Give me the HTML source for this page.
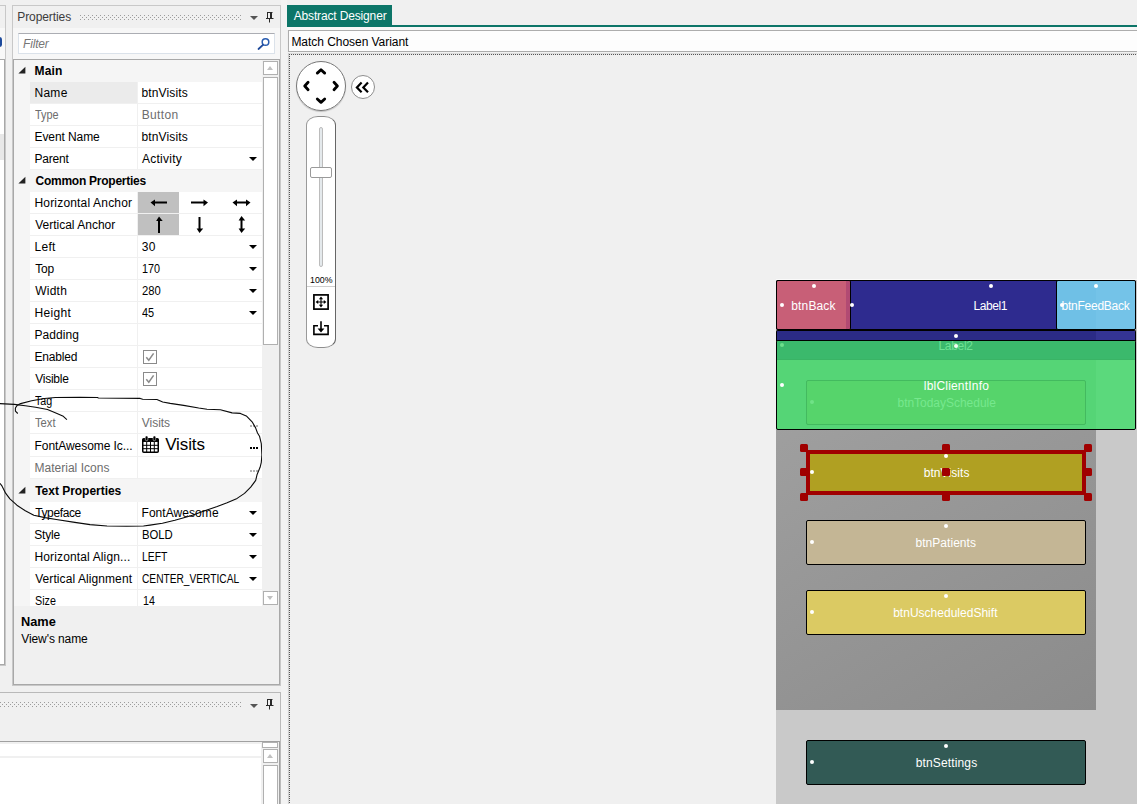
<!DOCTYPE html>
<html><head><meta charset="utf-8">
<style>
*{box-sizing:border-box;margin:0;padding:0}
html,body{width:1137px;height:804px;overflow:hidden;background:#f0f0f0;font-family:"Liberation Sans",sans-serif;font-size:12px;color:#000}
.a{position:absolute}
.t{position:absolute;white-space:nowrap;line-height:14px;height:14px;transform-origin:0 50%}
.b{font-weight:bold}
.g{color:#6d6d6d}
.row{position:absolute;left:30px;width:232px;height:21px;background:#fff}
.cat{position:absolute;left:14px;width:248px;height:22px;background:#f5f5f5}
.vs{position:absolute;left:137px;width:1px;background:#f0f0f0}
.dd{position:absolute;left:249px;width:0;height:0;border-left:4px solid transparent;border-right:4px solid transparent;border-top:4px solid #000}
.tri{position:absolute;left:20px;width:0;height:0;border-left:7px solid transparent;border-bottom:7px solid #222}
.dot{position:absolute;width:4.400px;height:4.400px;border-radius:50%;background:#fff}
.h{position:absolute;width:8px;height:8px;border-radius:1.5px;background:#a00000}
.view{position:absolute;border:1px solid #000;border-radius:2px;color:#fff;text-align:center}
</style></head><body>
<!-- LEFT SLIVER PANEL -->
<div class="a" style="left:-10px;top:5px;width:16px;height:661px;border:1px solid #c8c8c8;background:#f0f0f0"></div>
<div class="a" style="left:-10px;top:28px;width:15px;height:31px;background:#f8f8f8"></div>
<div class="a" style="left:-10px;top:59px;width:15px;height:606px;border:1px solid #a8a8a8;background:#fff"></div>
<div class="a" style="left:-3px;top:37px;width:4.500px;height:10px;background:#1d4a9c;border-radius:3px"></div>
<div class="a" style="left:0;top:134px;width:4px;height:26px;background:#e8e8e8"></div>
<!-- PROPERTIES PANEL -->
<div class="a" id="props" style="left:12px;top:5px;width:269px;height:681px;border:1px solid #c8c8c8;background:#f0f0f0"></div>
<div class="a" style="left:13px;top:28px;width:267px;height:31px;background:#f7f7f7"></div>
<div class="t " style="left:17.3px;top:9.9px;letter-spacing:-0.089px;color:#3c3c3c;font-size:12px;line-height:14px;height:14px;">Properties</div>
<svg class="a" style="left:80px;top:15px" width="161" height="5"><defs><pattern id="dp" width="4" height="4" patternUnits="userSpaceOnUse"><rect width="1" height="1" fill="#9c9c9c"/><rect x="2" y="2" width="1" height="1" fill="#9c9c9c"/></pattern></defs><rect width="161" height="5" fill="url(#dp)"/></svg>
<div class="a" style="left:250px;top:16px;width:0;height:0;border-left:4px solid transparent;border-right:4px solid transparent;border-top:4px solid #555"></div>
<svg class="a" style="left:265px;top:11px" width="10" height="12" viewBox="0 0 10 12"><path d="M2 1.500h5.500M2.500 1.500v6M6.500 1.500v6M1 7.500h7.500M4.500 8v3.500" stroke="#2a2a2a" stroke-width="1" fill="none"/><path d="M6 1.500v6" stroke="#2a2a2a" stroke-width="2" fill="none"/></svg>
<!-- filter -->
<div class="a" style="left:18px;top:33px;width:257px;height:21px;border:1px solid #abadb3;border-bottom-color:#dbe2ea;border-left-color:#dbe2ea;border-right-color:#dbe2ea;background:#fff"></div>
<div class="t " style="left:23.1px;top:36.8px;letter-spacing:-0.200px;color:#767676;font-size:12px;line-height:14px;height:14px;font-style:italic;">Filter</div>
<svg class="a" style="left:257px;top:37px" width="14" height="14" viewBox="0 0 14 14"><circle cx="8.5" cy="5" r="3.3" fill="none" stroke="#2a5db0" stroke-width="1.5"/><path d="M6 7.8L1.5 12" stroke="#1f4a9a" stroke-width="1.8" stroke-linecap="round"/></svg>

<!-- grid frame -->
<div class="a" id="grid" style="left:13px;top:59px;width:267px;height:626px;border:1px solid #a8a8a8;background:#f0f0f0"></div>
<div class="a" style="left:14px;top:60px;width:16px;height:546px;background:#f5f5f5"></div>
<div class="cat" style="top:60px;height:22px"></div>
<svg class="a" style="left:17px;top:65px" width="10" height="10"><path d="M8.400 1.700V8.500H1.400z" fill="#222"/></svg>
<div class="t b" style="left:34.5px;top:64.0px;letter-spacing:0.133px;">Main</div>
<div class="row" style="top:82px;height:21px"></div>
<div class="a" style="left:30px;top:82px;width:107px;height:21px;background:#ebebeb"></div>
<div class="vs" style="top:82px;height:21px"></div>
<div class="t " style="left:34.5px;top:86.0px;letter-spacing:0.267px;">Name</div>
<div class="t " style="left:141.4px;top:86.0px;letter-spacing:0.150px;">btnVisits</div>
<div class="row" style="top:104px;height:21px"></div>
<div class="vs" style="top:104px;height:21px"></div>
<div class="t g" style="left:34.8px;top:108.0px;transform:scaleX(0.904);">Type</div>
<div class="t g" style="left:141.7px;top:108.0px;letter-spacing:0.360px;">Button</div>
<div class="row" style="top:126px;height:21px"></div>
<div class="vs" style="top:126px;height:21px"></div>
<div class="t " style="left:34.5px;top:130.0px;letter-spacing:-0.089px;">Event Name</div>
<div class="t " style="left:141.4px;top:130.0px;letter-spacing:0.150px;">btnVisits</div>
<div class="row" style="top:148px;height:21px"></div>
<div class="vs" style="top:148px;height:21px"></div>
<div class="t " style="left:34.5px;top:152.0px;letter-spacing:-0.200px;">Parent</div>
<div class="t " style="left:142.1px;top:152.0px;letter-spacing:0.229px;">Activity</div>
<div class="dd" style="top:157px"></div>
<div class="cat" style="top:170px;height:22px"></div>
<svg class="a" style="left:17px;top:175px" width="10" height="10"><path d="M8.400 1.700V8.500H1.400z" fill="#222"/></svg>
<div class="t b" style="left:35.5px;top:174.0px;letter-spacing:-0.250px;">Common Properties</div>
<div class="row" style="top:192px;height:21px"></div>
<div class="vs" style="top:192px;height:21px"></div>
<div class="t " style="left:34.5px;top:196.0px;letter-spacing:0.175px;">Horizontal Anchor</div>
<div class="a" style="left:138px;top:192px;width:41px;height:21px;background:#c0c0c0"></div>
<svg class="a" style="left:138px;top:192px" width="123" height="21" viewBox="0 0 123 21"><g stroke="#000" stroke-width="2" fill="#000"><path d="M15 10.500h14" fill="none"/><path d="M12.500 10.500l4.500-2.900v6.600z" stroke="none"/><path d="M53 10.500h14" fill="none"/><path d="M70 10.500l-4.500-2.900v6.600z" stroke="none"/><path d="M97 10.500h13" fill="none"/><path d="M94.500 10.500l4.500-2.900v6.600z" stroke="none"/><path d="M112.500 10.500l-4.500-2.900v6.600z" stroke="none"/></g></svg>
<div class="row" style="top:214px;height:21px"></div>
<div class="vs" style="top:214px;height:21px"></div>
<div class="t " style="left:35.2px;top:218.0px;">Vertical Anchor</div>
<div class="a" style="left:138px;top:214px;width:41px;height:21px;background:#c0c0c0"></div>
<svg class="a" style="left:138px;top:214px" width="123" height="21" viewBox="0 0 123 21"><g stroke="#000" stroke-width="2" fill="#000"><path d="M21 5v14" fill="none"/><path d="M21 2.500l-2.900 4.500h6.600z" stroke="none"/><path d="M61.500 3v13" fill="none"/><path d="M61.500 19l-2.900-4.500h6.600z" stroke="none"/><path d="M103.500 5v11" fill="none"/><path d="M103.500 2l-2.900 4.500h6.600z" stroke="none"/><path d="M103.500 19l-2.900-4.500h6.600z" stroke="none"/></g></svg>
<div class="row" style="top:236px;height:21px"></div>
<div class="vs" style="top:236px;height:21px"></div>
<div class="t " style="left:34.5px;top:240.0px;letter-spacing:0.267px;">Left</div>
<div class="t " style="left:141.8px;top:240.0px;letter-spacing:0.200px;">30</div>
<div class="dd" style="top:245px"></div>
<div class="row" style="top:258px;height:21px"></div>
<div class="vs" style="top:258px;height:21px"></div>
<div class="t " style="left:35.2px;top:262.0px;letter-spacing:-0.200px;">Top</div>
<div class="t " style="left:142.4px;top:262.0px;transform:scaleX(0.900);">170</div>
<div class="dd" style="top:267px"></div>
<div class="row" style="top:280px;height:21px"></div>
<div class="vs" style="top:280px;height:21px"></div>
<div class="t " style="left:35.2px;top:284.0px;letter-spacing:0.250px;">Width</div>
<div class="t " style="left:141.9px;top:284.0px;transform:scaleX(0.937);">280</div>
<div class="dd" style="top:289px"></div>
<div class="row" style="top:302px;height:21px"></div>
<div class="vs" style="top:302px;height:21px"></div>
<div class="t " style="left:34.5px;top:306.0px;letter-spacing:0.320px;">Height</div>
<div class="t " style="left:142.1px;top:306.0px;transform:scaleX(0.908);">45</div>
<div class="dd" style="top:311px"></div>
<div class="row" style="top:324px;height:21px"></div>
<div class="vs" style="top:324px;height:21px"></div>
<div class="t " style="left:34.5px;top:328.0px;letter-spacing:0.067px;">Padding</div>
<div class="row" style="top:346px;height:21px"></div>
<div class="vs" style="top:346px;height:21px"></div>
<div class="t " style="left:34.5px;top:350.0px;letter-spacing:-0.167px;">Enabled</div>
<div class="a" style="left:143px;top:350px;width:14px;height:14px;border:1px solid #8a8a8a;background:#fff"></div>
<svg class="a" style="left:143px;top:350px" width="14" height="14" viewBox="0 0 14 14"><path d="M3.300 7.300L5.800 10.300L10.600 3.400" fill="none" stroke="#8a8a8a" stroke-width="1.5"/></svg>
<div class="row" style="top:368px;height:21px"></div>
<div class="vs" style="top:368px;height:21px"></div>
<div class="t " style="left:35.2px;top:372.0px;letter-spacing:-0.233px;">Visible</div>
<div class="a" style="left:143px;top:372px;width:14px;height:14px;border:1px solid #8a8a8a;background:#fff"></div>
<svg class="a" style="left:143px;top:372px" width="14" height="14" viewBox="0 0 14 14"><path d="M3.300 7.300L5.800 10.300L10.600 3.400" fill="none" stroke="#8a8a8a" stroke-width="1.5"/></svg>
<div class="row" style="top:390px;height:21px"></div>
<div class="vs" style="top:390px;height:21px"></div>
<div class="t " style="left:35.2px;top:394.0px;transform:scaleX(0.895);">Tag</div>
<div class="row" style="top:412px;height:21px"></div>
<div class="vs" style="top:412px;height:21px"></div>
<div class="t g" style="left:35.2px;top:416.0px;transform:scaleX(0.932);">Text</div>
<div class="t g" style="left:141.8px;top:416.0px;letter-spacing:-0.040px;">Visits</div>
<div class="a" style="left:250px;top:425px;width:2px;height:2px;background:#b5b5b5"></div>
<div class="a" style="left:253px;top:425px;width:2px;height:2px;background:#b5b5b5"></div>
<div class="a" style="left:256px;top:425px;width:2px;height:2px;background:#b5b5b5"></div>
<div class="row" style="top:434px;height:22px"></div>
<div class="vs" style="top:434px;height:22px"></div>
<div class="t " style="left:34.5px;top:439.0px;letter-spacing:-0.062px;">FontAwesome Ic...</div>
<div class="a" style="left:250px;top:447px;width:2px;height:2px;background:#000"></div>
<div class="a" style="left:253px;top:447px;width:2px;height:2px;background:#000"></div>
<div class="a" style="left:256px;top:447px;width:2px;height:2px;background:#000"></div>
<svg class="a" style="left:142px;top:436px" width="17" height="17" viewBox="0 0 17 17"><rect x="0.750" y="2.750" width="15.500" height="13.500" rx="1" fill="#fff" stroke="#000" stroke-width="1.500"/><rect x="0.750" y="2.750" width="15.500" height="3.200" fill="#000"/><path d="M1 9.300h15M1 12.700h15M4.700 6v10M8.500 6v10M12.300 6v10" stroke="#000" stroke-width="1"/><rect x="3.300" y="0" width="2.600" height="4.600" rx="1.200" fill="#000" stroke="#fff" stroke-width="0.500"/><rect x="11.100" y="0" width="2.600" height="4.600" rx="1.200" fill="#000" stroke="#fff" stroke-width="0.500"/></svg>
<div class="t " style="left:165.2px;top:435.1px;letter-spacing:-0.120px;color:#000;font-size:17px;line-height:20px;height:20px;">Visits</div>
<div class="row" style="top:457px;height:21px"></div>
<div class="vs" style="top:457px;height:21px"></div>
<div class="t g" style="left:34.5px;top:461.0px;letter-spacing:0.015px;">Material Icons</div>
<div class="a" style="left:250px;top:470px;width:2px;height:2px;background:#b5b5b5"></div>
<div class="a" style="left:253px;top:470px;width:2px;height:2px;background:#b5b5b5"></div>
<div class="a" style="left:256px;top:470px;width:2px;height:2px;background:#b5b5b5"></div>
<div class="cat" style="top:479px;height:23px"></div>
<svg class="a" style="left:17px;top:485px" width="10" height="10"><path d="M8.400 1.700V8.500H1.400z" fill="#222"/></svg>
<div class="t b" style="left:35.2px;top:484.0px;letter-spacing:-0.029px;">Text Properties</div>
<div class="row" style="top:502px;height:21px"></div>
<div class="vs" style="top:502px;height:21px"></div>
<div class="t " style="left:35.2px;top:506.0px;letter-spacing:-0.371px;">Typeface</div>
<div class="t " style="left:141.5px;top:506.0px;letter-spacing:0.060px;">FontAwesome</div>
<div class="dd" style="top:511px"></div>
<div class="row" style="top:524px;height:21px"></div>
<div class="vs" style="top:524px;height:21px"></div>
<div class="t " style="left:34.2px;top:528.0px;letter-spacing:-0.200px;">Style</div>
<div class="t " style="left:141.6px;top:528.0px;transform:scaleX(0.942);">BOLD</div>
<div class="dd" style="top:533px"></div>
<div class="row" style="top:546px;height:21px"></div>
<div class="vs" style="top:546px;height:21px"></div>
<div class="t " style="left:34.5px;top:550.0px;letter-spacing:0.133px;">Horizontal Align...</div>
<div class="t " style="left:141.6px;top:550.0px;transform:scaleX(0.864);">LEFT</div>
<div class="dd" style="top:555px"></div>
<div class="row" style="top:568px;height:21px"></div>
<div class="vs" style="top:568px;height:21px"></div>
<div class="t " style="left:35.2px;top:572.0px;letter-spacing:0.082px;">Vertical Alignment</div>
<div class="t " style="left:141.7px;top:572.0px;transform:scaleX(0.848);">CENTER_VERTICAL</div>
<div class="dd" style="top:577px"></div>
<div class="row" style="top:590px;height:16px"></div>
<div class="vs" style="top:590px;height:16px"></div>
<div class="t " style="left:35.1px;top:594.0px;transform:scaleX(0.895);">Size</div>
<div class="t " style="left:143.1px;top:594.0px;transform:scaleX(0.892);">14</div>
<svg class="a" style="left:0;top:390px" width="270" height="145" viewBox="0 390 270 145"><g fill="none" stroke="#0a0a0a" stroke-width="1.100" stroke-linejoin="round"><polyline points="0.0,403.6 14.3,404.4 25.3,405.7 35.6,407.2 47.5,409.5 57.0,413.5 63.3,416.3 66.9,419.7"/><polyline points="17.8,413.5 15.4,411.1 15.4,408.0 17.0,405.6 20.6,403.6 31.7,400.8 44.3,398.5 55.4,397.5 80.0,397.2 97.5,397.5 98.4,398.0 140.2,398.4 142.7,399.2 156.9,399.5 162.7,402.0 170.2,403.4 183.6,405.4 198.7,408.0 207.0,409.2 220.4,409.7 232.1,412.9 240.4,413.4 246.3,415.9 252.1,421.8 255.5,427.6 257.5,433.0 259.5,436.2 261.3,443.7 261.9,454.9 261.3,462.3 260.1,467.3 257.0,474.8 255.7,480.4 250.7,487.2 244.5,493.4 237.1,498.4 227.1,502.8 217.2,506.5 204.7,510.8 191.0,515.8 174.9,520.2 162.4,523.3 150.0,525.1 143.5,526.0 126.7,526.3 107.0,526.0 90.0,524.6 73.2,522.1 56.3,519.5 45.0,517.6 33.8,515.3 25.3,510.8 16.9,505.2 9.9,498.8 5.6,493.2 2.1,486.2 0.0,483.4"/></g></svg>
<!-- scrollbar -->
<div class="a" style="left:262px;top:60px;width:17px;height:546px;background:#f0f0f0"></div>
<div class="a" style="left:263px;top:61px;width:15px;height:14px;border:1px solid #b0b0b0;background:#fff"></div>
<div class="a" style="left:267px;top:66px;width:0;height:0;border-left:3.5px solid transparent;border-right:3.5px solid transparent;border-bottom:4px solid #c0c0c0"></div>
<div class="a" style="left:263px;top:77px;width:15px;height:268px;border:1px solid #b0b0b0;background:#fff"></div>
<div class="a" style="left:263px;top:591px;width:15px;height:14px;border:1px solid #b0b0b0;background:#fff"></div>
<div class="a" style="left:267px;top:596px;width:0;height:0;border-left:3.5px solid transparent;border-right:3.5px solid transparent;border-top:4px solid #c0c0c0"></div>

<!-- description -->
<div class="t " style="left:21.0px;top:615.0px;transform:scaleX(1.065);color:#000;font-size:12px;line-height:14px;height:14px;font-weight:bold;">Name</div>
<div class="t " style="left:21.3px;top:632.0px;letter-spacing:-0.100px;color:#000;font-size:12px;line-height:14px;height:14px;">View's name</div>

<!-- BOTTOM PANEL -->
<div class="a" style="left:-10px;top:692px;width:291px;height:130px;border:1px solid #b9b9b9;background:#f0f0f0"></div>
<svg class="a" style="left:0;top:702px" width="241" height="5"><rect width="241" height="5" fill="url(#dp)"/></svg>
<div class="a" style="left:250px;top:704px;width:0;height:0;border-left:4px solid transparent;border-right:4px solid transparent;border-top:4px solid #555"></div>
<svg class="a" style="left:265px;top:698px" width="10" height="12" viewBox="0 0 10 12"><path d="M2 1.500h5.500M2.500 1.500v6M6.500 1.500v6M1 7.500h7.500M4.500 8v3.500" stroke="#2a2a2a" stroke-width="1" fill="none"/><path d="M6 1.500v6" stroke="#2a2a2a" stroke-width="2" fill="none"/></svg>
<div class="a" style="left:-10px;top:741px;width:290px;height:80px;border:1px solid #a0a0a0;background:#fff"></div>
<div class="a" style="left:0;top:742px;width:262px;height:2px;background:#f0f0f0"></div>
<div class="a" style="left:0;top:756px;width:262px;height:2px;background:#f0f0f0"></div>
<div class="a" style="left:261px;top:742px;width:18px;height:70px;background:#f0f0f0"></div>
<div class="a" style="left:262px;top:742px;width:16px;height:6px;border:1px solid #b0b0b0;background:#fff"></div>
<div class="a" style="left:263px;top:749px;width:15px;height:14px;border:1px solid #b0b0b0;background:#fff"></div>
<div class="a" style="left:267px;top:754px;width:0;height:0;border-left:3.5px solid transparent;border-right:3.5px solid transparent;border-bottom:4px solid #c0c0c0"></div>
<div class="a" style="left:263px;top:765px;width:15px;height:60px;border:1px solid #b0b0b0;background:#fff"></div>

<!-- splitter -->
<div class="a" style="left:281px;top:0;width:6px;height:804px;background:#f3f3f3"></div>

<!-- DESIGNER -->
<div class="a" style="left:287px;top:5px;width:105px;height:21px;background:#0c7568"></div>
<div class="a" style="left:287px;top:25px;width:860px;height:2px;background:#0c7568"></div>
<div class="t " style="left:293.7px;top:9.4px;letter-spacing:-0.150px;color:#fff;font-size:12px;line-height:14px;height:14px;">Abstract Designer</div>
<div class="a" style="left:287px;top:27px;width:860px;height:3px;background:#f7f7f7"></div><div class="a" style="left:288px;top:30px;width:860px;height:22px;border:1px solid #adadad;background:#fdfdfd"></div>
<div class="t " style="left:291.4px;top:35.0px;letter-spacing:-0.042px;color:#000;font-size:12px;line-height:14px;height:14px;">Match Chosen Variant</div>
<div class="a" style="left:288px;top:53px;width:860px;height:1px;background:#dcdcdc"></div><div class="a" style="left:288px;top:53px;width:1px;height:760px;background:#cfcfcf"></div><div class="a" style="left:289px;top:54px;width:860px;height:1px;background:repeating-linear-gradient(90deg,#555 0 1px,#e8e8e8 1px 2px)"></div><div class="a" style="left:289px;top:54px;width:1px;height:760px;background:repeating-linear-gradient(180deg,#555 0 1px,#e8e8e8 1px 2px)"></div>

<!-- nav controls -->
<div class="a" style="left:296px;top:61px;width:50px;height:50px;border-radius:50%;border:1px solid #777;background:radial-gradient(circle at 50% 48%,#fff 72%,#e4e4e4 100%);box-shadow:0 1px 1px rgba(0,0,0,.2)"></div>
<svg class="a" style="left:296px;top:61px" width="50" height="50" viewBox="0 0 50 50"><g fill="none" stroke="#000" stroke-width="2.800" stroke-linecap="round" stroke-linejoin="round"><path d="M21.300 12.100L25 8.700l3.700 3.400"/><path d="M21.300 38L25 41.400l3.700-3.400"/><path d="M12.100 21.300L8.700 25l3.400 3.700"/><path d="M38 21.300L41.400 25l-3.400 3.700"/></g></svg>
<div class="a" style="left:351px;top:75px;width:24px;height:24px;border-radius:50%;border:1px solid #8e8e8e;background:#fff"></div>
<svg class="a" style="left:351px;top:75px" width="24" height="24" viewBox="0 0 24 24"><g fill="none" stroke="#000" stroke-width="2.200" stroke-linejoin="miter"><path d="M10.600 7.500L5.900 12.400l4.700 4.900"/><path d="M17 7.500l-4.700 4.900l4.700 4.900"/></g></svg>
<!-- zoom slider -->
<div class="a" style="left:306px;top:116px;width:30px;height:232px;border:1px solid #8e8e8e;border-left-color:#9a9a9a;border-right-color:#666;border-radius:12px/9px;background:#fff"></div>
<div class="a" style="left:319px;top:127px;width:4px;height:140px;border:1px solid #bcbcbc;border-radius:2px;background:#e4e9ec"></div>
<div class="a" style="left:310px;top:167px;width:22px;height:11px;border:1px solid #9a9a9a;border-radius:2px;background:#fff"></div>
<div class="t " style="left:309.7px;top:273.0px;transform:scaleX(0.926);color:#000;font-size:9.5px;line-height:14px;height:14px;">100%</div>
<div class="a" style="left:307px;top:286px;width:28px;height:1px;background:#cfcfcf"></div>
<svg class="a" style="left:313px;top:294px" width="16" height="16" viewBox="0 0 16 16"><rect x="0.900" y="0.900" width="14.200" height="14.200" fill="#fff" stroke="#000" stroke-width="1.700"/><path d="M8 4v8M4 8h8" stroke="#000" stroke-width="1.100"/><path d="M8 2.600L5.900 5.200h4.200zM8 13.400L5.900 10.800h4.200zM2.600 8L5.200 5.900v4.200zM13.400 8L10.800 5.900v4.200z" fill="#000"/></svg>
<svg class="a" style="left:313px;top:320px" width="16" height="16" viewBox="0 0 16 16"><path d="M5 5.800H0.900v8.600h14.200v-8.600H11" fill="none" stroke="#000" stroke-width="1.600"/><path d="M8 1.300v8" stroke="#000" stroke-width="1.600"/><path d="M8 12.500L4.600 8.500h6.800z" fill="#000"/></svg>

<!-- DEVICE -->
<div class="a" style="left:776px;top:279px;width:361px;height:1px;background:#fafafa"></div>
<div class="a" style="left:776px;top:280px;width:361px;height:524px;background:#c9c9c9"></div>
<div class="a" style="left:776px;top:280px;width:320px;height:430px;background:linear-gradient(150deg,#a5a5a5 0%,#989898 50%,#8b8b8b 100%)"></div>
<div class="view" style="left:776px;top:280px;width:360px;height:50px;background:#2e2b8f;border-color:#000;"></div>
<div class="a" style="left:776px;top:330px;width:360px;height:11px;background:#2b2b86;border:1px solid #000;border-bottom:0;border-radius:2px 2px 0 0"></div>
<div class="a" style="left:1096px;top:331px;width:39px;height:9px;background:#343493"></div>
<div class="view" style="left:776px;top:280px;width:75px;height:50px;background:#c85f77;border-color:#000;"></div>
<div class="a" style="left:846px;top:281px;width:4px;height:48px;background:#b24a73;border-radius:0 2px 2px 0"></div>
<div class="view" style="left:1056px;top:280px;width:80px;height:50px;background:#6fc0e6;border-color:#000;"></div>
<div class="a" style="left:1096px;top:281px;width:39px;height:48px;background:#74c3e8;border-radius:0 2px 2px 0"></div>
<div class="view" style="left:776px;top:340px;width:360px;height:90px;background:#55d576;border-color:#000;"></div>
<div class="a" style="left:1096px;top:341px;width:39px;height:88px;background:#5bd97c;border-radius:0 2px 2px 0"></div>
<div class="a" style="left:777px;top:341px;width:358px;height:19px;background:#3bb96c;border-radius:2px 2px 0 0;border-bottom:1px solid #39b465"></div>
<div class="view" style="left:806px;top:380px;width:280px;height:45px;background:#56d46b;border-color:#43ba5f;"></div>
<div class="t " style="left:791.3px;top:298.9px;letter-spacing:0.133px;color:#fff;font-size:12px;line-height:14px;height:14px;">btnBack</div>
<div class="dot" style="left:811.8px;top:283.8px;background:#fff"></div>
<div class="dot" style="left:779.8px;top:302.8px;background:#fff"></div>
<div class="t " style="left:973.5px;top:299.0px;letter-spacing:-0.400px;color:#fff;font-size:12px;line-height:14px;height:14px;">Label1</div>
<div class="dot" style="left:988.8px;top:283.8px;background:#fff"></div>
<div class="dot" style="left:849.8px;top:302.8px;background:#fff"></div>
<div class="t " style="left:1061.6px;top:299.0px;letter-spacing:-0.260px;color:#fff;font-size:12px;line-height:14px;height:14px;">btnFeedBack</div>
<div class="dot" style="left:1093.8px;top:283.8px;background:#fff"></div>
<div class="dot" style="left:1059.8px;top:302.8px;background:#fff"></div>
<div class="dot" style="left:953.8px;top:333.8px;background:#fff"></div>
<div class="t " style="left:938.4px;top:339.0px;letter-spacing:-0.280px;color:#6ee294;font-size:12px;line-height:14px;height:14px;">Label2</div>
<div class="dot" style="left:953.8px;top:343.8px;background:#f2fff5"></div>
<div class="dot" style="left:779.8px;top:342.8px;background:#6de08c"></div>
<div class="t " style="left:923.8px;top:378.6px;letter-spacing:0.200px;color:#fff;font-size:12px;line-height:14px;height:14px;">lblClientInfo</div>
<div class="dot" style="left:779.8px;top:382.8px;background:#fff"></div>
<div class="t " style="left:897.5px;top:395.6px;letter-spacing:-0.027px;color:#76e88e;font-size:12px;line-height:14px;height:14px;">btnTodaySchedule</div>
<div class="dot" style="left:809.8px;top:399.8px;background:#6fe287"></div>
<div class="a" style="left:806px;top:450px;width:280px;height:45px;background:#b0a022;border:4px solid #a00000"></div>
<div class="h" style="left:800px;top:444px"></div>
<div class="h" style="left:800px;top:468px"></div>
<div class="h" style="left:800px;top:493px"></div>
<div class="h" style="left:942px;top:444px"></div>
<div class="h" style="left:942px;top:468px"></div>
<div class="h" style="left:942px;top:493px"></div>
<div class="h" style="left:1084px;top:444px"></div>
<div class="h" style="left:1084px;top:468px"></div>
<div class="h" style="left:1084px;top:493px"></div>
<div class="t " style="left:923.7px;top:465.9px;letter-spacing:0.075px;color:#fff;font-size:12px;line-height:14px;height:14px;">btnVisits</div>
<div class="h" style="left:942px;top:468px"></div>
<div class="dot" style="left:943.8px;top:453.8px;background:#fff"></div>
<div class="dot" style="left:809.8px;top:469.8px;background:#fff"></div>
<div class="view" style="left:806px;top:520px;width:280px;height:45px;background:#c4b695;border-color:#000;"></div>
<div class="t " style="left:915.5px;top:535.9px;letter-spacing:0.040px;color:#fff;font-size:12px;line-height:14px;height:14px;">btnPatients</div>
<div class="dot" style="left:943.8px;top:523.8px;background:#fff"></div>
<div class="dot" style="left:809.8px;top:539.8px;background:#fff"></div>
<div class="view" style="left:806px;top:590px;width:280px;height:45px;background:#dbca63;border-color:#000;"></div>
<div class="t " style="left:893.2px;top:606.0px;letter-spacing:0.012px;color:#fff;font-size:12px;line-height:14px;height:14px;">btnUscheduledShift</div>
<div class="dot" style="left:943.8px;top:593.8px;background:#fff"></div>
<div class="dot" style="left:809.8px;top:609.8px;background:#fff"></div>
<div class="view" style="left:806px;top:740px;width:280px;height:45px;background:#325a55;border-color:#000;"></div>
<div class="t " style="left:915.7px;top:756.2px;letter-spacing:0.140px;color:#fff;font-size:12px;line-height:14px;height:14px;">btnSettings</div>
<div class="dot" style="left:943.8px;top:743.8px;background:#fff"></div>
<div class="dot" style="left:809.8px;top:759.8px;background:#fff"></div>
</body></html>
